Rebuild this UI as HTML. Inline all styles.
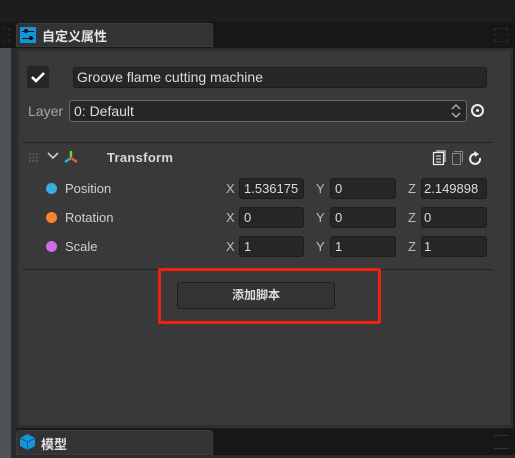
<!DOCTYPE html>
<html><head><meta charset="utf-8"><style>
*{margin:0;padding:0;box-sizing:border-box}
body{width:515px;height:458px;background:#1d1d1d;position:relative;overflow:hidden;font-family:"Liberation Sans","Noto Sans CJK SC",sans-serif;color:#d4d4d4;font-size:13px}
.a{position:absolute}
.inp{position:absolute;background:#262626;border:1px solid #1c1c1c;border-radius:3px;height:21px;line-height:19px;padding-left:4px;color:#dcdcdc;font-size:13px}
.lbl{position:absolute;font-size:13px;color:#cfcfcf}
.dot{position:absolute;width:11px;height:11px;border-radius:50%}
.ax{position:absolute;color:#bdbdbd;font-size:13px}
</style></head><body>
<div class="a" style="left:0;top:22px;width:515px;height:26px;background:#171717"></div>
<div class="a" style="left:0;top:48px;width:11px;height:410px;background:#4f5255"></div>
<div class="a" style="left:11px;top:48px;width:5px;height:410px;background:#2a2a2a"></div>
<div class="a" style="left:3px;top:28px;width:7px;height:14px;border:1px dashed #2e2e2e;border-left:none"></div>
<!-- top tab -->
<div class="a" style="left:16px;top:23px;width:197px;height:24px;background:#333;border-radius:3px 3px 0 0;border:1px solid #3c3c3c"></div>
<div class="a" style="left:20px;top:27px;width:16px;height:16px;background:#1296db"></div>
<div class="a" style="left:22px;top:31px;width:12px;height:1px;background:#111"></div>
<div class="a" style="left:22px;top:38px;width:12px;height:1px;background:#111"></div>
<div class="a" style="left:24px;top:29px;width:4px;height:4px;background:#111;border-radius:50%"></div>
<div class="a" style="left:29px;top:36px;width:4px;height:4px;background:#111;border-radius:50%"></div>
<div class="a" style="left:42px;top:26px;font-size:13px;font-weight:bold;color:#e6e6e6">自定义属性</div>
<div class="a" style="left:494px;top:28px;width:14px;height:14px;border:1px dashed #2e2e2e"></div>
<!-- panel -->
<div class="a" style="left:16px;top:48px;width:497px;height:380px;background:#2e2e2e"></div>
<div class="a" style="left:18px;top:50px;width:493px;height:376px;background:#393939;border:1px solid #303030"></div>
<!-- checkbox -->
<div class="a" style="left:27px;top:66px;width:22px;height:22px;background:#262626;border-radius:2px"></div>
<svg class="a" style="left:30px;top:69px" width="16" height="16"><path d="M2 8 L6 12 L14 4" stroke="#fff" stroke-width="2.6" fill="none"/></svg>
<div class="inp" style="left:73px;top:67px;width:414px;height:21px;font-size:14px;padding-left:3px">Groove flame cutting machine</div>
<div class="lbl" style="left:28px;top:103px;color:#a8a8a8;font-size:14px">Layer</div>
<div class="inp" style="left:69px;top:100px;width:398px;height:22px;border-color:#6a6a6a;line-height:20px;font-size:14px">0: Default</div>
<svg class="a" style="left:450px;top:102px" width="12" height="18"><path d="M2 7 L6 3 L10 7 M2 11 L6 15 L10 11" stroke="#aaa" stroke-width="1.5" fill="none"/></svg>
<div class="a" style="left:471px;top:104px;width:13px;height:13px;border:2px solid #eee;border-radius:50%"></div>
<div class="a" style="left:476px;top:109px;width:3px;height:3px;background:#eee;border-radius:50%"></div>
<div class="a" style="left:23px;top:142px;width:470px;height:1px;background:#262626"></div>
<!-- transform header -->
<div class="a" style="left:29px;top:153px;width:9px;height:9px;background:repeating-linear-gradient(90deg,#555 0 2px,transparent 2px 3.5px);-webkit-mask:repeating-linear-gradient(0deg,#000 0 2px,transparent 2px 3.5px)"></div>
<svg class="a" style="left:46px;top:151px" width="14" height="10"><path d="M2 2 L7 7 L12 2" stroke="#ccc" stroke-width="1.6" fill="none"/></svg>
<svg class="a" style="left:63px;top:150px" width="16" height="14"><path d="M8 1 V7" stroke="#7ed321" stroke-width="2.4"/><path d="M8 8 L2 12" stroke="#3aa8e8" stroke-width="2.4"/><path d="M8 8 L14 12" stroke="#f0572a" stroke-width="2.4"/></svg>
<div class="a" style="left:107px;top:150px;font-weight:bold;font-size:13px;color:#d8d8d8;letter-spacing:.3px">Transform</div>
<svg class="a" style="left:432px;top:150px" width="52" height="16"><rect x="1.5" y="2.5" width="10" height="12" fill="none" stroke="#eee" stroke-width="1.2"/><path d="M4 6H9M4 9H9M4 12H9" stroke="#eee"/><path d="M4 1H13V12" stroke="#eee" fill="none"/><rect x="20.5" y="3.5" width="8" height="11" fill="none" stroke="#888"/><path d="M22 1.5H30.5V12" stroke="#888" fill="none"/><path d="M44 4 A5 5 0 1 0 48 8" stroke="#eee" stroke-width="2" fill="none"/><path d="M42 1 L47 4 L43 7Z" fill="#eee"/></svg>
<!-- rows -->
<div class="dot" style="left:46px;top:183px;background:#3aabe6"></div>
<div class="lbl" style="left:65px;top:181px">Position</div>
<div class="dot" style="left:46px;top:212px;background:#f9842c"></div>
<div class="lbl" style="left:65px;top:210px">Rotation</div>
<div class="dot" style="left:46px;top:241px;background:#d26ce6"></div>
<div class="lbl" style="left:65px;top:239px">Scale</div>

<div class="ax" style="left:226px;top:181px">X</div><div class="inp" style="left:239px;top:178px;width:65px">1.536175</div>
<div class="ax" style="left:316px;top:181px">Y</div><div class="inp" style="left:330px;top:178px;width:66px">0</div>
<div class="ax" style="left:408px;top:181px">Z</div><div class="inp" style="left:421px;top:178px;width:66px;padding-left:2px">2.149898</div>
<div class="ax" style="left:226px;top:210px">X</div><div class="inp" style="left:239px;top:207px;width:65px">0</div>
<div class="ax" style="left:316px;top:210px">Y</div><div class="inp" style="left:330px;top:207px;width:66px">0</div>
<div class="ax" style="left:408px;top:210px">Z</div><div class="inp" style="left:421px;top:207px;width:66px;padding-left:2px">0</div>
<div class="ax" style="left:226px;top:239px">X</div><div class="inp" style="left:239px;top:236px;width:65px">1</div>
<div class="ax" style="left:316px;top:239px">Y</div><div class="inp" style="left:330px;top:236px;width:66px">1</div>
<div class="ax" style="left:408px;top:239px">Z</div><div class="inp" style="left:421px;top:236px;width:66px;padding-left:2px">1</div>
<div class="a" style="left:23px;top:269px;width:470px;height:1px;background:#262626"></div>
<!-- button -->
<div class="a" style="left:177px;top:282px;width:158px;height:27px;background:#333;border:1px solid #1e1e1e;border-radius:3px;text-align:center;line-height:25px;font-size:12px;font-weight:bold;color:#ddd">添加脚本</div>
<div class="a" style="left:158px;top:268px;width:223px;height:56px;border:3px solid #f01f14;border-radius:2px"></div>
<!-- bottom tab strip -->
<div class="a" style="left:16px;top:429px;width:499px;height:26px;background:#171717"></div>
<div class="a" style="left:16px;top:430px;width:197px;height:25px;background:#333;border-radius:3px 3px 0 0;border:1px solid #3c3c3c"></div>
<svg class="a" style="left:19px;top:433px" width="17" height="18"><path d="M8.5 1 L16 5 L16 13 L8.5 17 L1 13 L1 5Z" fill="#1296db"/><path d="M1 5 L8.5 9 L16 5 M8.5 9 V17" stroke="#0b5f94" stroke-width="1" fill="none"/></svg>
<div class="a" style="left:41px;top:434px;font-size:13px;font-weight:bold;color:#e0e0e0">模型</div>
<div class="a" style="left:494px;top:435px;width:14px;height:14px;border-top:1px solid #333;border-bottom:1px solid #333"></div>
<div class="a" style="left:16px;top:455px;width:499px;height:3px;background:#2a2a2a"></div>
</body></html>
